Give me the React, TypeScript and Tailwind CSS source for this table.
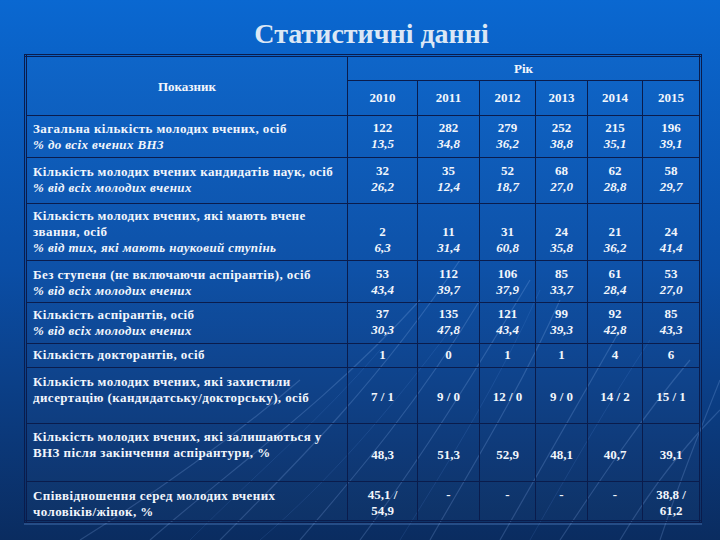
import React from 'react';

type Row = {
  label: string;
  sub?: string;
  values: [string, string?][];
  h: number;
  lpt: string;
  vpt: string;
};

const rows: Row[] = [
  {
    label: 'Загальна кількість молодих вчених, осіб',
    sub: '% до всіх вчених ВНЗ',
    values: [['122', '13,5'], ['282', '34,8'], ['279', '36,2'], ['252', '38,8'], ['215', '35,1'], ['196', '39,1']],
    h: 42,
    lpt: 'pt-[5px]',
    vpt: 'pt-[4px]',
  },
  {
    label: 'Кількість молодих вчених кандидатів наук, осіб',
    sub: '% від всіх молодих вчених',
    values: [['32', '26,2'], ['35', '12,4'], ['52', '18,7'], ['68', '27,0'], ['62', '28,8'], ['58', '29,7']],
    h: 46,
    lpt: 'pt-[6px]',
    vpt: 'pt-[5px]',
  },
  {
    label: 'Кількість молодих вчених, які мають вчене звання, осіб',
    sub: '% від тих, які мають науковий ступінь',
    values: [['2', '6,3'], ['11', '31,4'], ['31', '60,8'], ['24', '35,8'], ['21', '36,2'], ['24', '41,4']],
    h: 57,
    lpt: 'pt-[4px]',
    vpt: 'pt-[20px]',
  },
  {
    label: 'Без ступеня (не включаючи аспірантів), осіб',
    sub: '% від всіх молодих вчених',
    values: [['53', '43,4'], ['112', '39,7'], ['106', '37,9'], ['85', '33,7'], ['61', '28,4'], ['53', '27,0']],
    h: 42,
    lpt: 'pt-[6px]',
    vpt: 'pt-[5px]',
  },
  {
    label: 'Кількість аспірантів, осіб',
    sub: '% від всіх молодих вчених',
    values: [['37', '30,3'], ['135', '47,8'], ['121', '43,4'], ['99', '39,3'], ['92', '42,8'], ['85', '43,3']],
    h: 41,
    lpt: 'pt-[4px]',
    vpt: 'pt-[3px]',
  },
  {
    label: 'Кількість докторантів, осіб',
    values: [['1'], ['0'], ['1'], ['1'], ['4'], ['6']],
    h: 24,
    lpt: 'pt-[3px]',
    vpt: 'pt-[3px]',
  },
  {
    label: 'Кількість молодих вчених, які захистили дисертацію (кандидатську/докторську), осіб',
    values: [['7 / 1'], ['9 / 0'], ['12 / 0'], ['9 / 0'], ['14 / 2'], ['15 / 1']],
    h: 56,
    lpt: 'pt-[6px]',
    vpt: 'pt-[21px]',
  },
  {
    label: 'Кількість молодих вчених, які залишаються у ВНЗ після закінчення аспірантури, %',
    values: [['48,3'], ['51,3'], ['52,9'], ['48,1'], ['40,7'], ['39,1']],
    h: 58,
    lpt: 'pt-[5px]',
    vpt: 'pt-[23px]',
  },
  {
    label: 'Співвідношення серед молодих вчених чоловіків/жінок, %',
    values: [['45,1 /', '54,9'], ['-'], ['-'], ['-'], ['-'], ['38,8 /', '61,2']],
    h: 40,
    lpt: 'pt-[6px]',
    vpt: 'pt-[5px]',
  },
];

const years = ['2010', '2011', '2012', '2013', '2014', '2015'];
const colW = ['w-[70px]', 'w-[62px]', 'w-[56px]', 'w-[52px]', 'w-[55px]', 'w-[58px]'];

// decorative light streaks in the lower part of the slide background
const Streaks = () => (
  <svg className="absolute inset-0 w-full h-full pointer-events-none" viewBox="0 0 720 540" fill="none">
    <g stroke="#9cc4ff" strokeWidth="1.2" opacity="0.2">
      <path d="M150 540 C230 470 330 400 420 300" />
      <path d="M220 540 C300 460 380 380 460 260" />
      <path d="M300 540 C360 470 420 400 480 300" />
      <path d="M360 540 C420 460 470 380 530 280" />
      <path d="M430 540 C470 470 520 390 560 300" />
      <path d="M500 540 C540 470 580 400 620 330" />
      <path d="M560 540 C600 480 640 420 690 360" />
      <path d="M620 540 C650 490 680 450 720 410" />
      <path d="M80 540 C160 490 230 440 300 380" />
      <path d="M660 540 C680 480 700 430 720 380" />
    </g>
    <g stroke="#6fa8ff" strokeWidth="0.8" opacity="0.15">
      <path d="M260 540 C330 480 390 410 450 330" />
      <path d="M400 540 C450 460 500 380 540 290" />
      <path d="M530 540 C570 470 610 400 650 340" />
      <path d="M190 540 C260 470 320 420 380 350" />
    </g>
  </svg>
);

const cell = 'border border-[#0a1c4c] bg-white/[0.02]';

export default function App() {
  return (
    <div className="relative w-[720px] h-[540px] overflow-hidden bg-gradient-to-b from-[#0a68d1] via-[#0a4ea6] to-[#0a2c60] text-[#f2f6fc] font-['Liberation_Serif',serif]">
      <Streaks />
      <div className="relative flex flex-col items-center">
        <h1 className="mt-[15px] h-[38px] text-[28px] leading-[38px] font-bold text-[#dbe7f5] pl-[23px]">
          Статистичні данні
        </h1>
        <table className="ml-[6px] mt-[1px] border-collapse border-[3px] border-double border-[#0a1c4c] text-[13px] font-bold shadow-[0_2px_0_rgba(120,170,240,0.25)]">
          <thead>
            <tr className="h-[25px]">
              <th rowSpan={2} className={`w-[322px] ${cell} font-bold align-middle pt-[1px]`}>
                Показник
              </th>
              <th colSpan={6} className={`${cell} font-bold align-middle`}>
                Рік
              </th>
            </tr>
            <tr className="h-[35px]">
              {years.map((y, i) => (
                <th key={y} className={`${colW[i]} ${cell} font-bold align-middle`}>
                  {y}
                </th>
              ))}
            </tr>
          </thead>
          <tbody>
            {rows.map((r) => (
              <tr key={r.label} style={{ height: r.h }}>
                <td className={`${cell} align-top pl-[6px] pr-[6px] ${r.lpt} leading-[16px] tracking-[0.4px]`}>
                  <div>{r.label}</div>
                  {r.sub && <div className="italic">{r.sub}</div>}
                </td>
                {r.values.map(([a, b], i) => (
                  <td key={i} className={`${cell} align-top text-center ${r.vpt} leading-[16px]`}>
                    <div>{a}</div>
                    {b && <div className={r.label.startsWith('Співвідношення') ? '' : 'italic'}>{b}</div>}
                  </td>
                ))}
              </tr>
            ))}
          </tbody>
        </table>
      </div>
    </div>
  );
}
